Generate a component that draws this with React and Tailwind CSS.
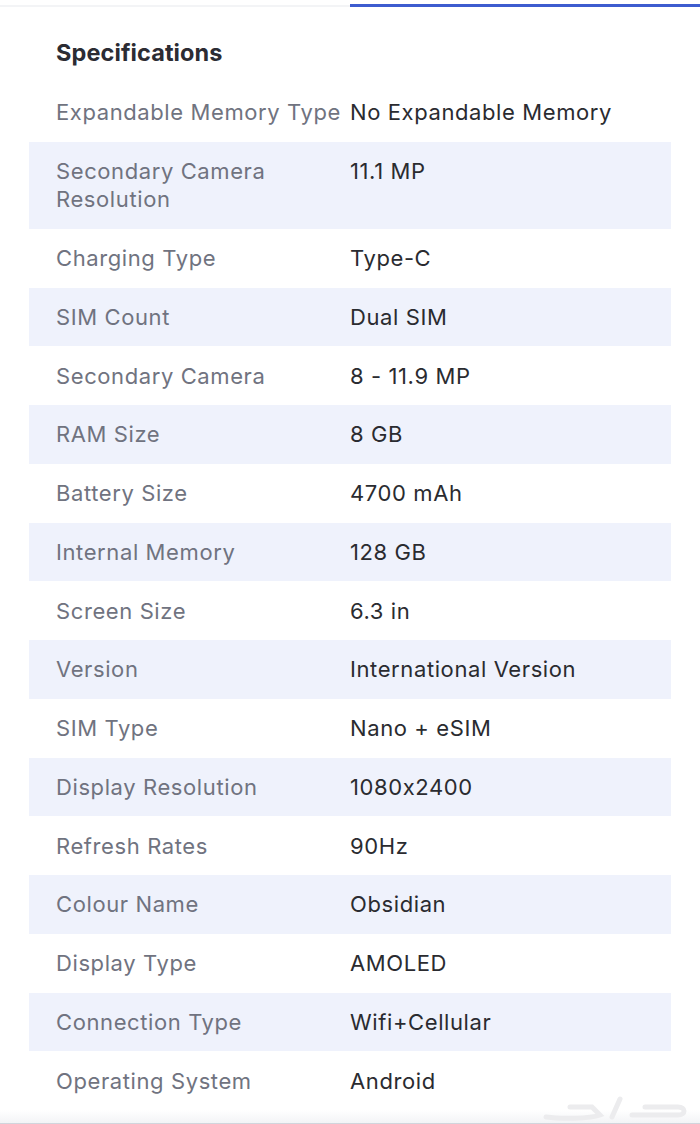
const specs = [
  ['Expandable Memory Type', 'No Expandable Memory'],
  ['Secondary Camera Resolution', '11.1 MP'],
  ['Charging Type', 'Type-C'],
  ['SIM Count', 'Dual SIM'],
  ['Secondary Camera', '8 - 11.9 MP'],
  ['RAM Size', '8 GB'],
  ['Battery Size', '4700 mAh'],
  ['Internal Memory', '128 GB'],
  ['Screen Size', '6.3 in'],
  ['Version', 'International Version'],
  ['SIM Type', 'Nano + eSIM'],
  ['Display Resolution', '1080x2400'],
  ['Refresh Rates', '90Hz'],
  ['Colour Name', 'Obsidian'],
  ['Display Type', 'AMOLED'],
  ['Connection Type', 'Wifi+Cellular'],
  ['Operating System', 'Android'],
]

export default function App() {
  return (
    <div className="w-[700px] h-[1124px] bg-white overflow-hidden flex flex-col font-['Inter',sans-serif]">
      {/* tabs underline */}
      <div className="flex h-[8px] items-start pt-[4px]">
        <div className="w-[350px] h-[2px] mt-[1px] bg-gray-100" />
        <div className="flex-1 h-[3px] bg-[#3d5ccf]" />
      </div>

      <div className="px-[29px] pt-[29px]">
        <h2 className="pl-[27px] text-[23.5px] leading-[32px] font-bold text-[#2c2c33] tracking-[0.1px]">
          Specifications
        </h2>

        <div className="mt-[14px]">
          {specs.map(([label, value], i) => (
            <div
              key={label}
              className={`grid grid-cols-[321px_1fr] py-[15.25px] text-[22px] leading-[28.25px] tracking-[0.6px] ${i % 2 === 1 ? 'bg-[#eff2fc]' : 'bg-white'}`}
            >
              <div className="pl-[27px] text-[#707380]">{label}</div>
              <div className="text-[#2a2b30] whitespace-nowrap">{value}</div>
            </div>
          ))}
        </div>
      </div>

      <div className="relative mt-auto h-[14px] bg-gradient-to-b from-white to-gray-100 border-b border-gray-300">
        <svg className="absolute right-[10px] bottom-[2px]" width="150" height="34" viewBox="0 0 150 34" fill="none">
          <path d="M6 30 C20 32 50 32 60 28 L52 20 L30 20" stroke="#ececee" strokeWidth="5" strokeLinecap="round" />
          <path d="M72 30 L80 12" stroke="#ececee" strokeWidth="5" strokeLinecap="round" />
          <path d="M92 28 L138 28 C146 28 146 20 138 20 L105 20" stroke="#ececee" strokeWidth="5" strokeLinecap="round" />
        </svg>
      </div>
    </div>
  )
}
